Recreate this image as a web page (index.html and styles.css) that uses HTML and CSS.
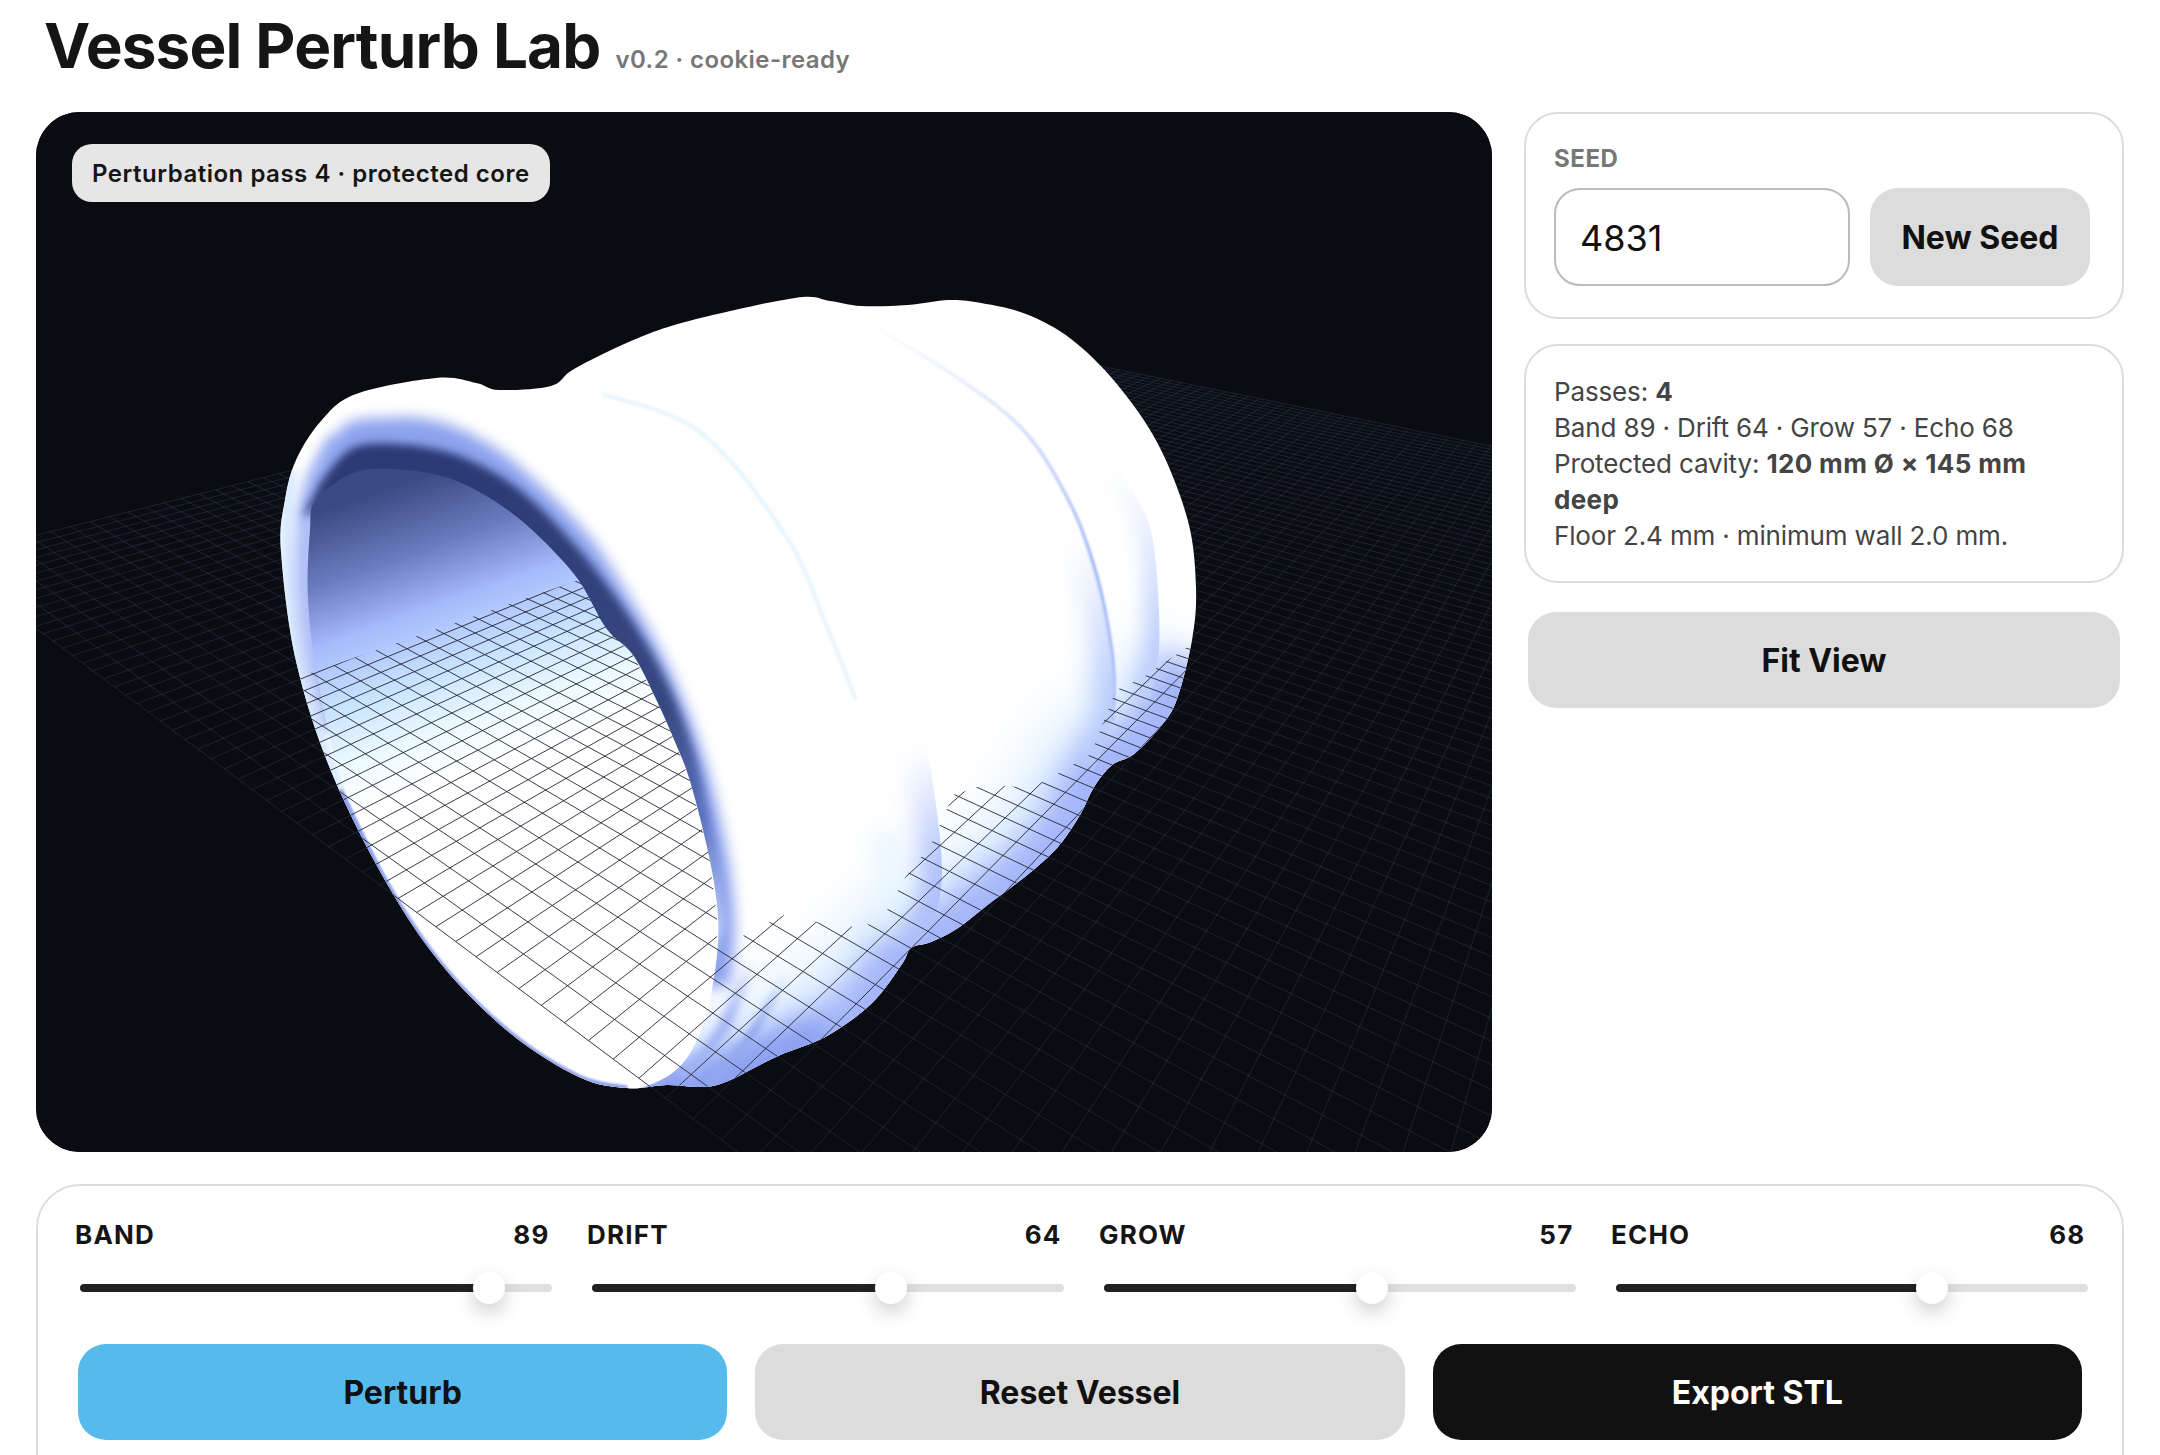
FILE: index.html
```html
<!DOCTYPE html>
<html lang="en">
<head>
<meta charset="utf-8">
<title>Vessel Perturb Lab</title>
<link rel="stylesheet" href="styles.css">
</head>
<body>
<main class="app">
  <header class="head">
    <h1 class="title">Vessel Perturb Lab</h1>
    <span class="version">v0.2 · cookie-ready</span>
  </header>
  <section class="workspace">
    <div class="stage">
      <canvas id="scene" class="scene" width="1456" height="1040"></canvas>
      <div class="badge">Perturbation pass 4 · protected core</div>
    </div>
    <aside class="side">
      <div class="card seed-card">
        <label class="seed-label" for="seed">SEED</label>
        <div class="seed-row">
          <input id="seed" class="seed-input" type="text" value="4831">
          <button class="btn btn-gray seed-btn">New Seed</button>
        </div>
      </div>
      <div class="card info-card">
        Passes: <b>4</b><br>
        Band 89 · Drift 64 · Grow 57 · Echo 68<br>
        Protected cavity: <b>120 mm Ø × 145 mm deep</b><br>
        Floor 2.4 mm · minimum wall 2.0 mm.
      </div>
      <button class="btn btn-gray fit-btn">Fit View</button>
    </aside>
  </section>
  <section class="panel">
    <div class="sliders">
      <div class="slider">
        <div class="slider-head"><span>BAND</span><span>89</span></div>
        <input class="range" type="range" min="0" max="100" value="89" style="--v:.89">
      </div>
      <div class="slider">
        <div class="slider-head"><span>DRIFT</span><span>64</span></div>
        <input class="range" type="range" min="0" max="100" value="64" style="--v:.64">
      </div>
      <div class="slider">
        <div class="slider-head"><span>GROW</span><span>57</span></div>
        <input class="range" type="range" min="0" max="100" value="57" style="--v:.57">
      </div>
      <div class="slider">
        <div class="slider-head"><span>ECHO</span><span>68</span></div>
        <input class="range" type="range" min="0" max="100" value="68" style="--v:.68">
      </div>
    </div>
    <div class="actions">
      <button class="btn btn-blue">Perturb</button>
      <button class="btn btn-gray">Reset Vessel</button>
      <button class="btn btn-black">Export STL</button>
    </div>
  </section>
</main>
<script src="scene.js"></script>
</body>
</html>
```
FILE: styles.css
```css
* { box-sizing: border-box; }
html, body { margin: 0; height: 100%; overflow: hidden; background: #fff; }
body { font-family: Inter, "Liberation Sans", sans-serif; color: #111; }
.app { padding: 0 36px; }
.head { height: 112px; display: flex; align-items: baseline; gap: 15px; padding: 0 0 0 8px; }
.title { margin: 0; font-size: 62px; font-weight: 700; line-height: 92px; letter-spacing: -.85px; color: #151515; }
.version { font-size: 24px; font-weight: 600; letter-spacing: .42px; color: #777; }
.workspace { display: grid; grid-template-columns: 1456px 600px; gap: 32px; height: 1040px; }
.stage { position: relative; width: 1456px; height: 1040px; border-radius: 44px; overflow: hidden; background: #0a0c11; }
.scene { display: block; width: 1456px; height: 1040px; }
.badge { position: absolute; left: 36px; top: 32px; height: 58px; padding: 0 20px; display: flex; align-items: center; border-radius: 20px; background: #e6e6e6; font-size: 24px; font-weight: 600; letter-spacing: .52px; color: #151515; }
.side { display: flex; flex-direction: column; gap: 25px; }
.card { border: 2px solid #dcdcdc; border-radius: 34px; background: #fff; }
.seed-card { height: 207px; padding: 30px 32px 0 28px; }
.seed-label { display: block; height: 44px; font-size: 24px; line-height: 30px; font-weight: 700; letter-spacing: .55px; color: #777; }
.seed-row { display: flex; gap: 20px; }
.seed-input { width: 296px; height: 98px; padding: 1px 24px 0; border: 2px solid #bbb; border-radius: 26px; font: 400 36px Inter, "Liberation Sans", sans-serif; color: #111; background: #fff; outline: 0; }
.info-card { height: 239px; padding: 28px 60px 28px 28px; font-size: 26px; line-height: 36px; letter-spacing: -.15px; color: #444; }
.info-card b { font-weight: 700; letter-spacing: .35px; }
.btn { border: 0; font: 700 32px Inter, "Liberation Sans", sans-serif; height: 96px; border-radius: 28px; color: #111; padding: 0; }
.btn-gray { background: #dcdcdc; }
.btn-blue { background: #56bbec; }
.btn-black { background: #111; color: #fff; }
.seed-btn { width: 220px; height: 98px; }
.fit-btn { margin: 4px 4px 0; }
.panel { margin-top: 32px; height: 400px; border: 2px solid #dcdcdc; border-radius: 44px; padding: 32px 37px 0; background: #fff; }
.sliders { display: grid; grid-template-columns: repeat(4, 474.5px); column-gap: 37.5px; }
.slider-head { display: flex; justify-content: space-between; font-size: 26px; line-height: 34px; font-weight: 700; letter-spacing: 1.2px; color: #151515; }
.range { -webkit-appearance: none; appearance: none; display: block; width: 472px; height: 32px; margin: 20px 0 0 5px; background: transparent; }
.range::-webkit-slider-runnable-track { height: 8px; border-radius: 4px; background: linear-gradient(to right, #222 calc(16px + (100% - 32px) * var(--v)), #e0e0e3 0); }
.range::-webkit-slider-thumb { -webkit-appearance: none; width: 32px; height: 32px; margin-top: -12px; border-radius: 50%; background: #fff; box-shadow: 0 8px 20px rgba(0,0,0,.2); transform: translateX(1px); }
.actions { display: grid; grid-template-columns: repeat(3, 1fr); gap: 28px; margin-top: 40px; padding: 0 3px; }
```
FILE: scene.js
```js
(function () {
  var ctx = document.getElementById('scene').getContext('2d');
  ctx.translate(-36, -112);

  function smooth(pts, closed) {
    var n = pts.length;
    function at(i) { return closed ? pts[(i + n) % n] : pts[Math.max(0, Math.min(n - 1, i))]; }
    ctx.moveTo(pts[0][0], pts[0][1]);
    var last = closed ? n : n - 1;
    for (var i = 0; i < last; i++) {
      var p0 = at(i - 1), p1 = at(i), p2 = at(i + 1), p3 = at(i + 2);
      ctx.bezierCurveTo(
        p1[0] + (p2[0] - p0[0]) / 6, p1[1] + (p2[1] - p0[1]) / 6,
        p2[0] - (p3[0] - p1[0]) / 6, p2[1] - (p3[1] - p1[1]) / 6,
        p2[0], p2[1]);
    }
    if (closed) ctx.closePath();
  }
  function shape(pts) { ctx.beginPath(); smooth(pts, true); }
  function stroke(pts, color, width, blur, alpha) {
    ctx.save();
    ctx.filter = blur ? 'blur(' + blur + 'px)' : 'none';
    ctx.globalAlpha = alpha === undefined ? 1 : alpha;
    ctx.strokeStyle = color; ctx.lineWidth = width; ctx.lineCap = 'butt'; ctx.lineJoin = 'round';
    ctx.beginPath(); smooth(pts, false); ctx.stroke();
    ctx.restore();
  }
  /* colour that appears gradually from y0 to y1 */
  function fade(y0, y1, rgb) {
    var g = ctx.createLinearGradient(0, y0, 0, y1);
    g.addColorStop(0, 'rgba(' + rgb + ',0)'); g.addColorStop(1, 'rgba(' + rgb + ',1)');
    return g;
  }
  /* a soft shade that stops sharply at a lobe's right-hand edge */
  function wash(pts, color, width, blur, alpha) {
    var s = pts[0], e = pts[pts.length - 1];
    ctx.save();
    ctx.beginPath(); smooth(pts, false);
    ctx.lineTo(e[0] - 500, e[1]); ctx.lineTo(s[0] - 500, s[1]); ctx.closePath(); ctx.clip();
    stroke(pts, color, width, blur, alpha);
    ctx.restore();
  }
  function band(outer, edge, color, blur) {
    ctx.save();
    ctx.filter = 'blur(' + blur + 'px)';
    ctx.fillStyle = color;
    ctx.beginPath(); smooth(outer, false);
    edge.slice().reverse().forEach(function (p) { ctx.lineTo(p[0] - 14, p[1] + 18); });
    ctx.closePath(); ctx.fill();
    ctx.restore();
  }

  /* floor grid: projected from two vanishing points */
  var A = [880, 321], V1 = [1750, 100], V2 = [-850, -33];
  var DA = 0.0045, DB = 0.0061, N = 85;
  function project(a, b) {
    var w = 1 - a - b;
    return [(A[0] - a * V2[0] - b * V1[0]) / w, (A[1] - a * V2[1] - b * V1[1]) / w];
  }
  function grid(color) {
    ctx.strokeStyle = color; ctx.lineWidth = 1;
    ctx.beginPath();
    var aMax = N * DA, bMax = N * DB;
    for (var i = 0; i <= N; i++) {
      var p = project(i * DA, 0), q = project(i * DA, bMax);
      ctx.moveTo(p[0], p[1]); ctx.lineTo(q[0], q[1]);
      p = project(0, i * DB); q = project(aMax, i * DB);
      ctx.moveTo(p[0], p[1]); ctx.lineTo(q[0], q[1]);
    }
    ctx.stroke();
  }

  ctx.fillStyle = '#0a0c11';
  ctx.fillRect(0, 0, 2200, 1500);
  grid('rgba(64,94,136,.28)');

  var silhouette = [
    [281, 551], [285, 500], [296, 460], [321, 421], [356, 394], [436, 378], [476, 383], [499, 390], [551, 386], [574, 369],
    [631, 341], [689, 321], [795, 298], [830, 301], [861, 306], [908, 305], [949, 300], [981, 303], [1026, 314], [1071, 339],
    [1116, 383], [1158, 444], [1188, 521], [1196, 588], [1192, 640], [1177, 699], [1161, 726], [1134, 754], [1112, 765],
    [1094, 787], [1080, 815], [1057, 848], [1026, 876], [990, 903], [958, 928], [931, 942], [911, 948], [902, 964], [872, 1003],
    [827, 1036], [778, 1056], [728, 1081], [702, 1087], [667, 1085], [627, 1088], [579, 1077], [510, 1033], [441, 964],
    [386, 882], [331, 771], [296, 661]
  ];
  var rightEdge = [
    [316, 500], [356, 472], [407, 470], [459, 482], [517, 517], [574, 574], [606, 628], [633, 655], [656, 699],
    [675, 742], [690, 781], [709, 856], [718, 917], [715, 971]
  ];
  var opening = [
    [308, 600], [310, 530]].concat(rightEdge).concat([
    [701, 1031], [671, 1074], [613, 1090], [540, 1060], [470, 1000], [400, 900], [345, 790], [318, 680]
  ]);

  ctx.save();
  shape(silhouette); ctx.clip();
  ctx.fillStyle = '#fff'; ctx.fillRect(0, 0, 2200, 1500);

  /* shading along the lower edge */
  var lower = [[600, 1100], [702, 1097], [778, 1066], [827, 1046], [872, 1013], [902, 974], [931, 952], [958, 938], [990, 913], [1026, 886], [1057, 858], [1080, 825], [1094, 797], [1112, 775], [1134, 764], [1161, 736], [1179, 709], [1197, 665]];
  stroke(lower, '#dcedff', 150, 28, .95);
  stroke(lower, '#a4b5fa', 80, 15);
  stroke([[650, 1095], [702, 1090], [778, 1060], [827, 1040]], '#8a9eef', 50, 11, .85);

  /* lobes */
  wash([[1120, 470], [1148, 521], [1157, 577], [1159, 649], [1150, 700]], fade(470, 640, '190,208,252'), 30, 9);
  stroke([[850, 312], [958, 378], [1026, 433], [1071, 505], [1094, 566], [1107, 621], [1114, 676], [1112, 721]], fade(320, 560, '165,186,248'), 3.5, 1);
  wash([[1071, 505], [1094, 566], [1107, 621], [1114, 676], [1112, 721], [1094, 770]], fade(540, 690, '184,204,251'), 40, 12);
  stroke([[603, 394], [700, 432], [786, 536], [827, 627], [856, 700]], '#dff2ff', 3, 1.5);
  wash([[859, 593], [890, 660], [922, 732], [935, 798], [942, 876], [931, 926], [913, 948]], fade(750, 870, '176,192,251'), 44, 12);
  stroke([[880, 830], [895, 880], [885, 930]], '#e6f5ff', 26, 12, .8);
  stroke([[752, 960], [722, 1030], [684, 1078]], fade(960, 1020, '160,178,244'), 12, 4);
  stroke([[785, 975], [748, 1040], [708, 1085]], fade(975, 1030, '146,168,238'), 8, 3);

  /* rim, left side */
  stroke([[290, 470], [287, 560], [305, 690], [345, 800], [395, 890]], '#d6e9ff', 12, 4);
  stroke([[340, 440], [314, 490], [306, 570], [316, 660], [336, 730]], '#a6b8f6', 24, 6, .9);

  /* dark band round the opening */
  band([[308, 500], [340, 430], [385, 418], [440, 422], [495, 448], [545, 490], [592, 540], [628, 595], [660, 650], [685, 705], [703, 755], [718, 810], [730, 870], [735, 930], [730, 985]],
    rightEdge, '#8da2ee', 7);
  var navy = ctx.createLinearGradient(0, 440, 0, 930);
  navy.addColorStop(0, '#2a3973'); navy.addColorStop(.55, '#384981'); navy.addColorStop(.78, '#5f74c2'); navy.addColorStop(1, '#bfcffc');
  band([[322, 480], [355, 447], [410, 445], [465, 458], [520, 490], [575, 545], [618, 600], [650, 650], [675, 700], [695, 755], [708, 810], [720, 870], [724, 925]],
    rightEdge, navy, 4);

  /* inside of the vessel */
  var inner = ctx.createLinearGradient(440, 470, 545, 770);
  inner.addColorStop(0, '#3b4a82'); inner.addColorStop(.22, '#6b7cc0'); inner.addColorStop(.4, '#a6b9fb');
  inner.addColorStop(.6, '#c8e3ff'); inner.addColorStop(.78, '#edfaff'); inner.addColorStop(.92, '#fff');
  shape(opening); ctx.fillStyle = inner; ctx.fill();

  /* thin shaded lip along the lower-left edge */
  stroke([[340, 790], [386, 882], [441, 964], [510, 1033], [579, 1077], [627, 1088]], '#8396e8', 5, 1.2, .9);

  /* floor seen over the lower part of the vessel */
  ctx.save();
  ctx.beginPath();
  [[250, 695], [296, 678], [579, 580], [606, 628], [633, 655], [656, 699], [675, 742], [690, 781], [709, 856], [717, 917],
   [717, 949], [784, 915], [816, 922], [863, 928], [886, 912], [906, 876], [931, 845], [953, 795], [987, 784], [1017, 787],
   [1044, 782], [1091, 754], [1116, 690], [1141, 679], [1193, 643], [1300, 700], [1300, 1300], [200, 1300], [200, 700]
  ].forEach(function (p, i) { if (i) ctx.lineTo(p[0], p[1]); else ctx.moveTo(p[0], p[1]); });
  ctx.closePath(); ctx.clip();
  grid('rgba(34,40,54,.9)');
  ctx.restore();
  ctx.restore();
})();
```
